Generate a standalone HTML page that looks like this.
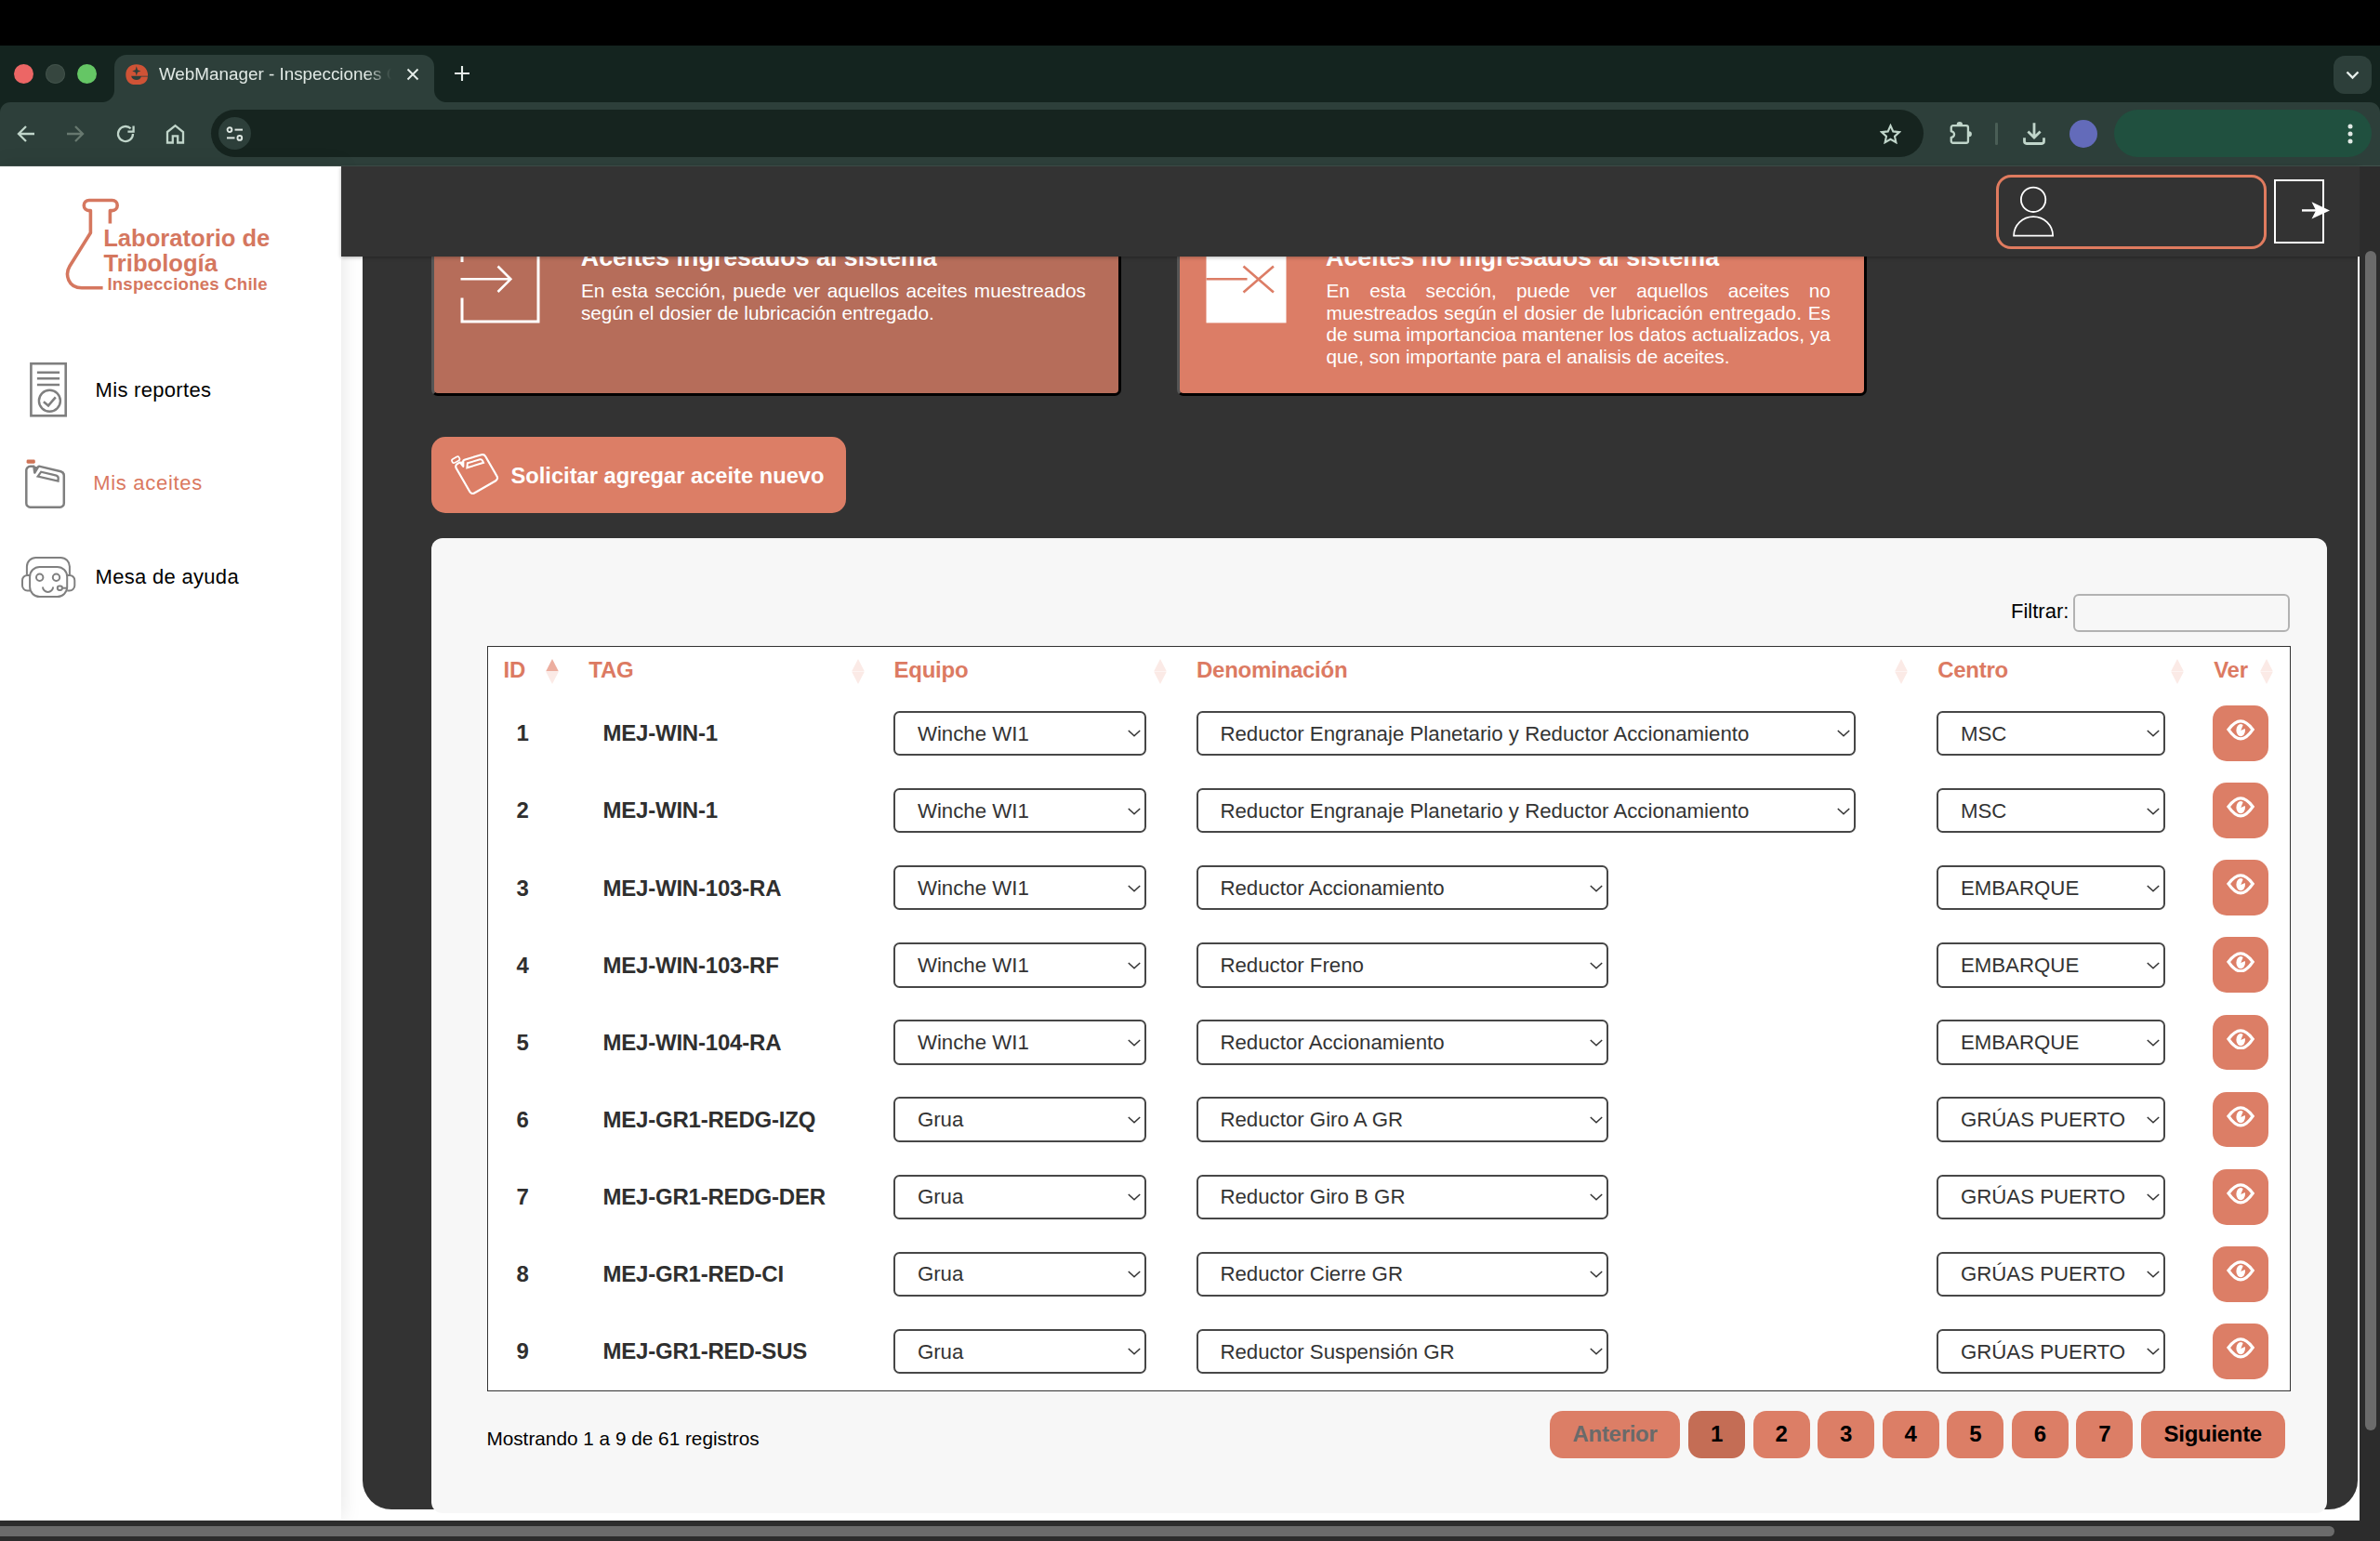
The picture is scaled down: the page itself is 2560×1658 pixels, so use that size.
<!DOCTYPE html>
<html lang="es"><head><meta charset="utf-8"><title>WebManager - Inspecciones Chile</title>
<style>
*{box-sizing:border-box;margin:0;padding:0}
html,body{width:2560px;height:1658px;overflow:hidden}
body{position:relative;background:#fff;font-family:"Liberation Sans",Arial,Helvetica,sans-serif;color:#333}
.abs{position:absolute}
/* ---------- browser chrome ---------- */
#osbar{position:absolute;left:0;top:0;width:2560px;height:49px;background:#000}
#tabstrip{position:absolute;left:0;top:49px;width:2560px;height:85px;background:#14241f}
.tl{position:absolute;top:19.8px;width:21.2px;height:21.2px;border-radius:50%}
#tab{position:absolute;left:123.3px;top:10px;width:344px;height:51px;background:#2d3f3a;border-radius:13px 13px 0 0}
#tab:before,#tab:after{content:"";position:absolute;bottom:0;width:13px;height:13px}
#tab:before{left:-13px;background:radial-gradient(circle at 0 0,transparent 12.5px,#2d3f3a 13.5px)}
#tab:after{right:-13px;background:radial-gradient(circle at 100% 0,transparent 12.5px,#2d3f3a 13.5px)}
#tabtitle{position:absolute;left:47.6px;top:9px;width:252px;height:24px;overflow:hidden;white-space:nowrap;font-size:18.85px;line-height:24px;color:#e1e9e5;-webkit-mask-image:linear-gradient(90deg,#000 222px,transparent 250px);mask-image:linear-gradient(90deg,#000 222px,transparent 250px)}
#tabmenu{position:absolute;left:2510px;top:10.5px;width:41px;height:41px;border-radius:12px;background:#2d3f3a}
#toolbar{position:absolute;left:0;top:110px;width:2560px;height:69px;background:#2d3f3a;border-radius:11px 11px 0 0;border-bottom:1.5px solid #41514c}
#omni{position:absolute;left:227px;top:8px;width:1842px;height:51px;border-radius:26px;background:#16241f}
#siteinfo{position:absolute;left:7.5px;top:8px;width:35px;height:35px;border-radius:50%;background:#2d3f3a}
#profile{position:absolute;left:2226px;top:19px;width:30px;height:30px;border-radius:50%;background:#636bba}
#pill{position:absolute;left:2274px;top:8px;width:277px;height:51px;border-radius:26px;background:#20503f}
.tbi{position:absolute}
/* ---------- page ---------- */
#sidebar{position:absolute;left:0;top:179px;width:366.5px;height:1456px;background:#fff;box-shadow:0 0 21px rgba(0,0,0,.115)}
#header{position:absolute;left:366.6px;top:179px;width:2171.6px;height:97px;background:#333;box-shadow:0 1px 4px rgba(0,0,0,.3);z-index:5}
#dark{position:absolute;left:390.3px;top:276px;width:2146.1px;height:1347.8px;background:#333;border-radius:0 0 31px 31px}
#vscroll{position:absolute;left:2538.2px;top:179px;width:21.8px;height:1457px;background:#2c2c2c;z-index:6}
#vthumb{position:absolute;left:5.5px;top:90.5px;width:12.3px;height:1269px;border-radius:6.2px;background:#6b6b6b}
#hscroll{position:absolute;left:0;top:1635.9px;width:2560px;height:22.1px;background:#2c2c2c;z-index:6}
#hthumb{position:absolute;left:-8px;top:5.8px;width:2519px;height:11.8px;border-radius:6px;background:#6b6b6b}
.nav{position:absolute;left:0;width:366px;height:60px}
.nav span{position:absolute;top:0;font-size:22px;line-height:26px;color:#000;white-space:nowrap}
.logo text{font-family:"Liberation Sans",Arial,sans-serif;font-weight:bold;fill:#d5775f}
/* cards */
.card{position:absolute;top:197px;height:229px;border:3px solid;border-color:#555 #000 #000 #555;border-radius:7px}
.card h3{position:absolute;top:61.3px;font-size:26.8px;line-height:32px;font-weight:bold;color:#fff;white-space:nowrap}
.card p{position:absolute;top:101px;font-size:20.77px;line-height:23.7px;color:#fff;text-align:justify}
.card p span{display:block;text-align-last:justify;white-space:nowrap}
.card p span.last{text-align-last:left}
#btn{position:absolute;left:464.3px;top:470px;width:445.5px;height:82px;border-radius:15px;background:#dc7e66}
#btn span{position:absolute;left:85.2px;top:27.8px;font-size:23.7px;line-height:28px;font-weight:bold;color:#fff;white-space:nowrap}
#panel{position:absolute;left:464.4px;top:578.6px;width:2038.7px;height:1049.7px;background:#f7f7f7;border-radius:12px}
#filterlbl{position:absolute;left:2163px;top:645px;font-size:22px;line-height:26px;color:#000}
#filter{position:absolute;left:2230px;top:638.5px;width:233px;height:41px;border:2px solid #b2b2b2;border-radius:6px}
#table{position:absolute;left:524px;top:695px;width:1939.5px;height:801.7px;background:#fff;border:1px solid #333}
.th{position:absolute;top:11.2px;font-size:24px;line-height:28px;font-weight:bold;color:#dc7a62;white-space:nowrap;letter-spacing:-.25px}
.sort{position:absolute;top:13.2px;width:14px;height:27px}
.row{position:absolute;left:-1px;width:1939.5px;height:83px;margin-top:-696px}
.cid,.ctag{position:absolute;top:27.6px;font-size:24px;line-height:28px;font-weight:bold;color:#2f2f2f;white-space:nowrap}
.cid{left:31.5px}.ctag{left:124.4px;letter-spacing:-.2px}
.sel{position:absolute;top:17.05px;height:48.4px;border:2px solid #474747;border-radius:6.5px;background:#fff}
.sel span{position:absolute;left:23.5px;top:9.8px;font-size:22.25px;line-height:26px;color:#333;white-space:nowrap}
.sel .chev{position:absolute;right:4px;top:18.6px}
.ver{position:absolute;left:1856.4px;top:11.25px;width:59.8px;height:59.8px;border-radius:15px;background:#dc7e66}
.ver .eye{position:absolute;left:14.7px;top:15.2px}
#info{position:absolute;left:523.4px;top:1534.5px;font-size:20.77px;line-height:26px;color:#000;white-space:nowrap}
.pg{position:absolute;top:1517.5px;height:51.5px;border-radius:14px;background:#dc7e66;font-size:24px;line-height:49.5px;font-weight:bold;color:#000;text-align:center;letter-spacing:-.3px}

</style></head>
<body>
<div id="osbar"></div>
<div id="tabstrip">
  <div class="tl" style="left:14.7px;background:#ec6665"></div>
  <div class="tl" style="left:48.8px;background:#36463f;box-shadow:inset 0 0 0 1px #41514a"></div>
  <div class="tl" style="left:82.9px;background:#65c665"></div>
  <div id="tab">
    <svg class="abs" style="left:11.4px;top:9.8px" width="24.4" height="22.5" viewBox="0 0 25 23" preserveAspectRatio="none"><path d="M12.2 0.3 C19.6 0.3 24.7 5.3 24.7 12.4 V13.1 H6.3 C6.9 16.2 9.4 17.5 12.3 17.5 C14.7 17.5 16.5 16.4 17.3 13.9 H24.5 C24.2 19.6 19.8 22.7 13.4 22.7 H10.6 C4.4 22.7 0.3 18.4 0.3 11.6 C0.3 4.9 5 0.3 12.2 0.3 Z" fill="#cf5336"/><path d="M12.1 2.4 L13.3 6.5 L16.8 7.7 L13.3 8.9 L12.1 12.8 L10.9 8.9 L7.4 7.7 L10.9 6.5 Z" fill="#2d3f3a"/></svg>
    <div id="tabtitle">WebManager - Inspecciones Chile</div>
    <svg class="abs" style="left:313.6px;top:14px" width="14" height="14" viewBox="0 0 14 14"><path d="M1.5 1.5 L12.5 12.5 M12.5 1.5 L1.5 12.5" stroke="#e6eeea" stroke-width="1.9" fill="none"/></svg>
  </div>
  <svg class="abs" style="left:488px;top:21px" width="18" height="18" viewBox="0 0 18 18"><path d="M9 1 V17 M1 9 H17" stroke="#e6eeea" stroke-width="2.1" fill="none"/></svg>
  <div id="tabmenu"><svg class="abs" style="left:13px;top:16px" width="15" height="10" viewBox="0 0 15 10"><path d="M1.5 1.5 L7.5 7.5 L13.5 1.5" stroke="#e6eeea" stroke-width="2.4" fill="none"/></svg></div>
</div>
<div id="toolbar">
  <!-- back -->
  <svg class="tbi" style="left:18px;top:24px" width="20" height="20" viewBox="0 0 20 20"><path d="M19 10 H2.5 M10 2 L2 10 L10 18" stroke="#c0d5ca" stroke-width="2.3" fill="none"/></svg>
  <!-- forward -->
  <svg class="tbi" style="left:71px;top:24px" width="20" height="20" viewBox="0 0 20 20"><path d="M1 10 H17.5 M10 2 L18 10 L10 18" stroke="#67786f" stroke-width="2.3" fill="none"/></svg>
  <!-- reload -->
  <svg class="tbi" style="left:124px;top:23px" width="22" height="22" viewBox="0 0 22 22"><path d="M19 11 A8 8 0 1 1 16.6 5.3" stroke="#c0d5ca" stroke-width="2.3" fill="none"/><path d="M19.6 2.4 V8.6 H13.4" stroke="#c0d5ca" stroke-width="2.3" fill="none"/></svg>
  <!-- home -->
  <svg class="tbi" style="left:178px;top:23px" width="21" height="22" viewBox="0 0 21 22"><path d="M2 9 L10.5 2.2 L19 9 V20.5 H13.2 V13.4 H7.8 V20.5 H2 Z" stroke="#c0d5ca" stroke-width="2.3" fill="none" stroke-linejoin="miter"/></svg>
  <div id="omni">
    <div id="siteinfo"><svg class="abs" style="left:8.5px;top:9.5px" width="19" height="16" viewBox="0 0 19 16"><circle cx="4" cy="3.6" r="2.4" stroke="#dfe8e3" stroke-width="1.9" fill="none"/><path d="M9.5 3.6 H18" stroke="#dfe8e3" stroke-width="2"/><circle cx="14.8" cy="12.4" r="2.4" stroke="#dfe8e3" stroke-width="1.9" fill="none"/><path d="M1 12.4 H9.5" stroke="#dfe8e3" stroke-width="2"/></svg></div>
    <!-- star -->
    <svg class="abs" style="left:1794.5px;top:14.5px" width="23" height="22" viewBox="0 0 23 22"><path d="M11.5 2.2 L14.3 8.4 L21 9.1 L16 13.6 L17.4 20.2 L11.5 16.8 L5.6 20.2 L7 13.6 L2 9.1 L8.7 8.4 Z" stroke="#c0d5ca" stroke-width="2.1" fill="none" stroke-linejoin="miter"/></svg>
  </div>
  <!-- extension -->
  <svg class="tbi" style="left:2095.5px;top:19.5px" width="27" height="27" viewBox="0 0 27 27"><path d="M2.75 11.3 V7.15 A2 2 0 0 1 4.75 5.15 H18.95 A2 2 0 0 1 20.95 7.15 V21.75 A2 2 0 0 1 18.95 23.75 H4.75 A2 2 0 0 1 2.75 21.75 V17.9 A3.3 3.3 0 0 0 2.75 11.3 Z" stroke="#c0d5ca" stroke-width="2.3" fill="none" stroke-linejoin="round"/><path d="M8.65 4.2 A3.2 3.2 0 0 1 15.05 4.2 Z M21.9 11.35 A3 3 0 0 1 21.9 17.35 Z" fill="#c0d5ca"/></svg>
  <div class="abs" style="left:2146.2px;top:22px;width:2.6px;height:23.6px;background:#4a5e56;border-radius:1.3px"></div>
  <!-- download -->
  <svg class="tbi" style="left:2175.5px;top:22px" width="24" height="24" viewBox="0 0 24 24"><path d="M12 0.2 V16 M5.4 9.4 L12 16 L18.6 9.4" stroke="#c0d5ca" stroke-width="2.8" fill="none"/><path d="M1.5 16.2 V20.1 A2.4 2.4 0 0 0 3.9 22.5 H20.1 A2.4 2.4 0 0 0 22.5 20.1 V16.2" stroke="#c0d5ca" stroke-width="2.8" fill="none"/></svg>
  <div id="profile"></div>
  <div id="pill">
    <svg class="abs" style="left:250.5px;top:14.5px" width="6" height="22" viewBox="0 0 6 22"><circle cx="3" cy="3" r="2.5" fill="#e1e9e5"/><circle cx="3" cy="11" r="2.5" fill="#e1e9e5"/><circle cx="3" cy="19" r="2.5" fill="#e1e9e5"/></svg>
  </div>
</div>

<div id="sidebar">
  <svg class="logo abs" style="left:0;top:0" width="366" height="170" viewBox="0 0 366 170">
    <path d="M118.4 61.4 V47.6 H120.65 A5.55 5.55 0 0 0 120.65 36.5 H95.85 A5.55 5.55 0 0 0 95.85 47.6 H97.4 V71.5 L74.9 107.5 C69.6 116.4 73.2 130.8 88 130.8 H110.6" fill="none" stroke="#d5775f" stroke-width="3.6" stroke-linejoin="round"/>
    <text x="111.2" y="86.4" font-size="25.6">Laboratorio de</text>
    <text x="111.6" y="112.5" font-size="25.6">Tribología</text>
    <text x="115.4" y="132.5" font-size="18.6" letter-spacing="0.22">Inspecciones Chile</text>
  </svg>
  <!-- Mis reportes -->
  <svg class="abs" style="left:28px;top:207px" width="48" height="66" viewBox="28 386 48 66">
    <rect x="33.4" y="391.2" width="37.3" height="56.1" fill="none" stroke="#7f7f7f" stroke-width="2.6"/>
    <path d="M39.9 400.7 H64.1 M39.9 407.3 H64.1 M39.9 414 H64.1" stroke="#7f7f7f" stroke-width="2.5" fill="none"/>
    <circle cx="53.4" cy="431.2" r="11.5" fill="none" stroke="#7f7f7f" stroke-width="2.4"/>
    <path d="M46.9 432.2 L52 436.4 L59.8 427.4" fill="none" stroke="#7f7f7f" stroke-width="2.5"/>
  </svg>
  <div class="nav" style="top:227.5px"><span style="left:102.6px;letter-spacing:.3px">Mis reportes</span></div>
  <!-- Mis aceites -->
  <svg class="abs" style="left:22px;top:311px" width="54" height="62" viewBox="22 490 54 62">
    <rect x="28.6" y="494.5" width="9.2" height="4.2" rx="1.4" fill="#cf7457"/>
    <path id="canbody" d="M28.3 506 A4.2 4.2 0 0 1 32.5 501.8 H36.4 L37.3 508.6 L41 502.3 Q41.6 501.6 43 501.9 L65.4 507.2 Q68.8 508.2 68.8 511.6 V541.5 A4.2 4.2 0 0 1 64.6 545.7 H32.5 A4.2 4.2 0 0 1 28.3 541.5 Z" fill="none" stroke="#7f7f7f" stroke-width="2.5" stroke-linejoin="round"/>
    <path d="M36.4 501.8 L37.3 509.4 L41 502.3 Z" fill="#7f7f7f"/>
    <path id="canhandle" d="M40.7 512.6 L44.2 507.7 L60.6 511.6 Q62.8 512.4 62.7 514.6 L62.5 517.5 Z" fill="none" stroke="#7f7f7f" stroke-width="2.3" stroke-linejoin="miter"/>
  </svg>
  <div class="nav" style="top:328px"><span style="left:100.2px;color:#da7860;letter-spacing:.7px">Mis aceites</span></div>
  <!-- Mesa de ayuda -->
  <svg class="abs" style="left:20px;top:417px" width="64" height="50" viewBox="20 596 64 50">
    <g fill="none" stroke="#808080" stroke-width="2">
      <path d="M28.9 618.7 V609.6 A9.6 9.6 0 0 1 38.5 600 H65.3 A9.6 9.6 0 0 1 74.9 609.6 V618.7"/>
      <rect x="32.1" y="610" width="40.1" height="32" rx="10.5"/>
      <path d="M32 618.9 H29.5 A5.5 5.5 0 0 0 24 624.4 V630 A5.5 5.5 0 0 0 29.5 635.5 H32"/>
      <path d="M72.3 618.9 H74.8 A5.5 5.5 0 0 1 80.3 624.4 V630 A5.5 5.5 0 0 1 74.8 635.5 H72.3"/>
      <circle cx="42.7" cy="621.3" r="3.7"/><circle cx="60.5" cy="621.3" r="3.7"/>
      <path d="M46 631.4 A5.55 5.55 0 0 0 57.1 631.4"/>
      <rect x="61.8" y="630.6" width="5.2" height="4.3" rx="2.1"/>
      <path d="M67.4 632.7 H72"/>
    </g>
  </svg>
  <div class="nav" style="top:429.2px"><span style="left:102.6px;letter-spacing:.3px">Mesa de ayuda</span></div>
</div>

<div id="dark"></div>
<!-- cards -->
<div class="card" style="left:464.3px;width:742.2px;background:#b66d5a">
  <svg class="abs" style="left:26px;top:70px" width="92" height="82" viewBox="493 270 92 82"><path d="M497 282 V270 H579 V346 H497 V320.5" fill="none" stroke="#fff" stroke-width="3"/><path d="M495.5 300.3 H548 M535.5 286.5 L549.3 300.3 L535.5 314" fill="none" stroke="#fff" stroke-width="2.6"/></svg>
  <h3 style="left:157.5px">Aceites ingresados al sistema</h3>
  <p style="left:157.6px;width:543px"><span>En esta sección, puede ver aquellos aceites muestreados</span><span class="last">según el dosier de lubricación entregado.</span></p>
</div>
<div class="card" style="left:1265.6px;width:742.8px;background:#dc7d66">
  <svg class="abs" style="left:26px;top:60px" width="92" height="92" viewBox="1294.5 260 92 92"><rect x="1297" y="262" width="86" height="85.4" fill="#fff"/><path d="M1297 300.3 H1341 M1337 286.4 L1369.4 314.4 M1369.4 286.4 L1337 314.4" fill="none" stroke="#dc7d66" stroke-width="2.6"/></svg>
  <h3 style="left:157.5px">Aceites no ingresados al sistema</h3>
  <p style="left:157.9px;width:542.4px"><span>En esta sección, puede ver aquellos aceites no</span><span>muestreados según el dosier de lubricación entregado. Es</span><span>de suma importancioa mantener los datos actualizados, ya</span><span class="last">que, son importante para el analisis de aceites.</span></p>
</div>
<div id="header">
  <div class="abs" style="left:1780.5px;top:9px;width:291px;height:80px;border:3px solid #e07b5f;border-radius:16px"></div>
  <svg class="abs" style="left:1794px;top:18px" width="52" height="62" viewBox="2160.5 197 52 62"><circle cx="2186.6" cy="214.8" r="13.2" fill="none" stroke="#fff" stroke-width="1.8"/><path d="M2165.6 253.6 A21 20.4 0 0 1 2207.6 253.6 Z" fill="none" stroke="#fff" stroke-width="1.8" stroke-linejoin="miter"/></svg>
  <div class="abs" style="left:2079.5px;top:14px;width:54px;height:69px;border:2.6px solid #fff"></div>
  <svg class="abs" style="left:2104px;top:33px" width="40" height="28" viewBox="2470.5 212 40 28"><path d="M2475.5 226.4 H2492" stroke="#fff" stroke-width="2.4" fill="none"/><path d="M2505.5 226.4 L2486 217.2 L2490.6 226.4 L2486 235.6 Z" fill="#fff"/></svg>
</div>
<!-- button -->
<div id="btn">
  <svg class="abs" style="left:14px;top:8px" width="70" height="66" viewBox="478.5 478.5 70 66">
    <g transform="translate(513.1 508.6) rotate(-30) scale(0.83) translate(-48.5 -523.75)" fill="none" stroke="#fff" stroke-width="2.6" stroke-linejoin="round">
      <rect x="28" y="493.6" width="10.4" height="5.4" rx="2.2" stroke-width="2"/>
      <path d="M28.3 506 A4.2 4.2 0 0 1 32.5 501.8 H36.4 L37.3 508.6 L41 502.3 Q41.6 501.6 43 501.9 L65.4 507.2 Q68.8 508.2 68.8 511.6 V541.5 A4.2 4.2 0 0 1 64.6 545.7 H32.5 A4.2 4.2 0 0 1 28.3 541.5 Z"/>
      <path d="M36.4 501.8 L37.3 509.4 L41 502.3 Z" fill="#fff" stroke="none"/>
      <path d="M40.7 512.6 L44.2 507.7 L60.6 511.6 Q62.8 512.4 62.7 514.6 L62.5 517.5 Z" stroke-linejoin="miter" stroke-width="2.4"/>
    </g>
  </svg>
  <span>Solicitar agregar aceite nuevo</span>
</div>
<!-- panel -->
<div id="panel"></div>
<div id="filterlbl">Filtrar:</div>
<div id="filter"></div>
<div id="table">
  <span class="th" style="left:16.5px">ID</span>
  <span class="th" style="left:108.3px">TAG</span>
  <span class="th" style="left:436.5px">Equipo</span>
  <span class="th" style="left:762px">Denominación</span>
  <span class="th" style="left:1559.2px">Centro</span>
  <span class="th" style="left:1856.2px">Ver</span>
  <svg class="sort" style="left:62.3px" viewBox="0 0 14 27"><path d="M7 0 L13.8 13.2 H0.2 Z" fill="#ecae9f"/><path d="M7 27 L13.8 13.8 H0.2 Z" fill="#fbeae6"/></svg>
  <svg class="sort" style="left:391.1px" viewBox="0 0 14 27"><path d="M7 0 L13.8 13.2 H0.2 Z M7 27 L13.8 13.8 H0.2 Z" fill="#fbeae6"/></svg>
  <svg class="sort" style="left:716.1px" viewBox="0 0 14 27"><path d="M7 0 L13.8 13.2 H0.2 Z M7 27 L13.8 13.8 H0.2 Z" fill="#fbeae6"/></svg>
  <svg class="sort" style="left:1513.3px" viewBox="0 0 14 27"><path d="M7 0 L13.8 13.2 H0.2 Z M7 27 L13.8 13.8 H0.2 Z" fill="#fbeae6"/></svg>
  <svg class="sort" style="left:1810.2px" viewBox="0 0 14 27"><path d="M7 0 L13.8 13.2 H0.2 Z M7 27 L13.8 13.8 H0.2 Z" fill="#fbeae6"/></svg>
  <svg class="sort" style="left:1906.2px" viewBox="0 0 14 27"><path d="M7 0 L13.8 13.2 H0.2 Z M7 27 L13.8 13.8 H0.2 Z" fill="#fbeae6"/></svg>
<div class="row" style="top:747.75px"><span class="cid">1</span><span class="ctag">MEJ-WIN-1</span><div class="sel s1" style="left:437.4px;width:271.7px"><span>Winche WI1</span><svg class="chev" viewBox="0 0 14 8" width="14" height="8"><path d="M0.8 1 L7 6.8 L13.2 1" fill="none" stroke="#333" stroke-width="1.5"/></svg></div><div class="sel s2" style="left:762.9000000000001px;width:709.2px"><span>Reductor Engranaje Planetario y Reductor Accionamiento</span><svg class="chev" viewBox="0 0 14 8" width="14" height="8"><path d="M0.8 1 L7 6.8 L13.2 1" fill="none" stroke="#333" stroke-width="1.5"/></svg></div><div class="sel s3" style="left:1559.4px;width:245.7px"><span>MSC</span><svg class="chev" viewBox="0 0 14 8" width="14" height="8"><path d="M0.8 1 L7 6.8 L13.2 1" fill="none" stroke="#333" stroke-width="1.5"/></svg></div><div class="ver"><svg class="eye" viewBox="0 0 30.2 22.7" width="30.2" height="22.7"><ellipse cx="15.2" cy="11.7" rx="4.8" ry="6.6" fill="#fff"/><path d="M15.3 12 L18.4 4.2 L22 4.2 L22 9 Z" fill="#dc7e66"/><path d="M2 10.9 C6.4 5.2 10.6 1.9 15.1 1.9 C19.6 1.9 23.8 5.2 28.2 10.9 C23.8 17.4 19.6 20.9 15.1 20.9 C10.6 20.9 6.4 17.4 2 10.9 Z" fill="none" stroke="#fff" stroke-width="3.3" stroke-linejoin="miter"/></svg></div></div>
<div class="row" style="top:830.88px"><span class="cid">2</span><span class="ctag">MEJ-WIN-1</span><div class="sel s1" style="left:437.4px;width:271.7px"><span>Winche WI1</span><svg class="chev" viewBox="0 0 14 8" width="14" height="8"><path d="M0.8 1 L7 6.8 L13.2 1" fill="none" stroke="#333" stroke-width="1.5"/></svg></div><div class="sel s2" style="left:762.9000000000001px;width:709.2px"><span>Reductor Engranaje Planetario y Reductor Accionamiento</span><svg class="chev" viewBox="0 0 14 8" width="14" height="8"><path d="M0.8 1 L7 6.8 L13.2 1" fill="none" stroke="#333" stroke-width="1.5"/></svg></div><div class="sel s3" style="left:1559.4px;width:245.7px"><span>MSC</span><svg class="chev" viewBox="0 0 14 8" width="14" height="8"><path d="M0.8 1 L7 6.8 L13.2 1" fill="none" stroke="#333" stroke-width="1.5"/></svg></div><div class="ver"><svg class="eye" viewBox="0 0 30.2 22.7" width="30.2" height="22.7"><ellipse cx="15.2" cy="11.7" rx="4.8" ry="6.6" fill="#fff"/><path d="M15.3 12 L18.4 4.2 L22 4.2 L22 9 Z" fill="#dc7e66"/><path d="M2 10.9 C6.4 5.2 10.6 1.9 15.1 1.9 C19.6 1.9 23.8 5.2 28.2 10.9 C23.8 17.4 19.6 20.9 15.1 20.9 C10.6 20.9 6.4 17.4 2 10.9 Z" fill="none" stroke="#fff" stroke-width="3.3" stroke-linejoin="miter"/></svg></div></div>
<div class="row" style="top:914.00px"><span class="cid">3</span><span class="ctag">MEJ-WIN-103-RA</span><div class="sel s1" style="left:437.4px;width:271.7px"><span>Winche WI1</span><svg class="chev" viewBox="0 0 14 8" width="14" height="8"><path d="M0.8 1 L7 6.8 L13.2 1" fill="none" stroke="#333" stroke-width="1.5"/></svg></div><div class="sel s2" style="left:762.9000000000001px;width:443.2px"><span>Reductor Accionamiento</span><svg class="chev" viewBox="0 0 14 8" width="14" height="8"><path d="M0.8 1 L7 6.8 L13.2 1" fill="none" stroke="#333" stroke-width="1.5"/></svg></div><div class="sel s3" style="left:1559.4px;width:245.7px"><span>EMBARQUE</span><svg class="chev" viewBox="0 0 14 8" width="14" height="8"><path d="M0.8 1 L7 6.8 L13.2 1" fill="none" stroke="#333" stroke-width="1.5"/></svg></div><div class="ver"><svg class="eye" viewBox="0 0 30.2 22.7" width="30.2" height="22.7"><ellipse cx="15.2" cy="11.7" rx="4.8" ry="6.6" fill="#fff"/><path d="M15.3 12 L18.4 4.2 L22 4.2 L22 9 Z" fill="#dc7e66"/><path d="M2 10.9 C6.4 5.2 10.6 1.9 15.1 1.9 C19.6 1.9 23.8 5.2 28.2 10.9 C23.8 17.4 19.6 20.9 15.1 20.9 C10.6 20.9 6.4 17.4 2 10.9 Z" fill="none" stroke="#fff" stroke-width="3.3" stroke-linejoin="miter"/></svg></div></div>
<div class="row" style="top:997.12px"><span class="cid">4</span><span class="ctag">MEJ-WIN-103-RF</span><div class="sel s1" style="left:437.4px;width:271.7px"><span>Winche WI1</span><svg class="chev" viewBox="0 0 14 8" width="14" height="8"><path d="M0.8 1 L7 6.8 L13.2 1" fill="none" stroke="#333" stroke-width="1.5"/></svg></div><div class="sel s2" style="left:762.9000000000001px;width:443.2px"><span>Reductor Freno</span><svg class="chev" viewBox="0 0 14 8" width="14" height="8"><path d="M0.8 1 L7 6.8 L13.2 1" fill="none" stroke="#333" stroke-width="1.5"/></svg></div><div class="sel s3" style="left:1559.4px;width:245.7px"><span>EMBARQUE</span><svg class="chev" viewBox="0 0 14 8" width="14" height="8"><path d="M0.8 1 L7 6.8 L13.2 1" fill="none" stroke="#333" stroke-width="1.5"/></svg></div><div class="ver"><svg class="eye" viewBox="0 0 30.2 22.7" width="30.2" height="22.7"><ellipse cx="15.2" cy="11.7" rx="4.8" ry="6.6" fill="#fff"/><path d="M15.3 12 L18.4 4.2 L22 4.2 L22 9 Z" fill="#dc7e66"/><path d="M2 10.9 C6.4 5.2 10.6 1.9 15.1 1.9 C19.6 1.9 23.8 5.2 28.2 10.9 C23.8 17.4 19.6 20.9 15.1 20.9 C10.6 20.9 6.4 17.4 2 10.9 Z" fill="none" stroke="#fff" stroke-width="3.3" stroke-linejoin="miter"/></svg></div></div>
<div class="row" style="top:1080.25px"><span class="cid">5</span><span class="ctag">MEJ-WIN-104-RA</span><div class="sel s1" style="left:437.4px;width:271.7px"><span>Winche WI1</span><svg class="chev" viewBox="0 0 14 8" width="14" height="8"><path d="M0.8 1 L7 6.8 L13.2 1" fill="none" stroke="#333" stroke-width="1.5"/></svg></div><div class="sel s2" style="left:762.9000000000001px;width:443.2px"><span>Reductor Accionamiento</span><svg class="chev" viewBox="0 0 14 8" width="14" height="8"><path d="M0.8 1 L7 6.8 L13.2 1" fill="none" stroke="#333" stroke-width="1.5"/></svg></div><div class="sel s3" style="left:1559.4px;width:245.7px"><span>EMBARQUE</span><svg class="chev" viewBox="0 0 14 8" width="14" height="8"><path d="M0.8 1 L7 6.8 L13.2 1" fill="none" stroke="#333" stroke-width="1.5"/></svg></div><div class="ver"><svg class="eye" viewBox="0 0 30.2 22.7" width="30.2" height="22.7"><ellipse cx="15.2" cy="11.7" rx="4.8" ry="6.6" fill="#fff"/><path d="M15.3 12 L18.4 4.2 L22 4.2 L22 9 Z" fill="#dc7e66"/><path d="M2 10.9 C6.4 5.2 10.6 1.9 15.1 1.9 C19.6 1.9 23.8 5.2 28.2 10.9 C23.8 17.4 19.6 20.9 15.1 20.9 C10.6 20.9 6.4 17.4 2 10.9 Z" fill="none" stroke="#fff" stroke-width="3.3" stroke-linejoin="miter"/></svg></div></div>
<div class="row" style="top:1163.38px"><span class="cid">6</span><span class="ctag">MEJ-GR1-REDG-IZQ</span><div class="sel s1" style="left:437.4px;width:271.7px"><span>Grua</span><svg class="chev" viewBox="0 0 14 8" width="14" height="8"><path d="M0.8 1 L7 6.8 L13.2 1" fill="none" stroke="#333" stroke-width="1.5"/></svg></div><div class="sel s2" style="left:762.9000000000001px;width:443.2px"><span>Reductor Giro A GR</span><svg class="chev" viewBox="0 0 14 8" width="14" height="8"><path d="M0.8 1 L7 6.8 L13.2 1" fill="none" stroke="#333" stroke-width="1.5"/></svg></div><div class="sel s3" style="left:1559.4px;width:245.7px"><span>GRÚAS PUERTO</span><svg class="chev" viewBox="0 0 14 8" width="14" height="8"><path d="M0.8 1 L7 6.8 L13.2 1" fill="none" stroke="#333" stroke-width="1.5"/></svg></div><div class="ver"><svg class="eye" viewBox="0 0 30.2 22.7" width="30.2" height="22.7"><ellipse cx="15.2" cy="11.7" rx="4.8" ry="6.6" fill="#fff"/><path d="M15.3 12 L18.4 4.2 L22 4.2 L22 9 Z" fill="#dc7e66"/><path d="M2 10.9 C6.4 5.2 10.6 1.9 15.1 1.9 C19.6 1.9 23.8 5.2 28.2 10.9 C23.8 17.4 19.6 20.9 15.1 20.9 C10.6 20.9 6.4 17.4 2 10.9 Z" fill="none" stroke="#fff" stroke-width="3.3" stroke-linejoin="miter"/></svg></div></div>
<div class="row" style="top:1246.50px"><span class="cid">7</span><span class="ctag">MEJ-GR1-REDG-DER</span><div class="sel s1" style="left:437.4px;width:271.7px"><span>Grua</span><svg class="chev" viewBox="0 0 14 8" width="14" height="8"><path d="M0.8 1 L7 6.8 L13.2 1" fill="none" stroke="#333" stroke-width="1.5"/></svg></div><div class="sel s2" style="left:762.9000000000001px;width:443.2px"><span>Reductor Giro B GR</span><svg class="chev" viewBox="0 0 14 8" width="14" height="8"><path d="M0.8 1 L7 6.8 L13.2 1" fill="none" stroke="#333" stroke-width="1.5"/></svg></div><div class="sel s3" style="left:1559.4px;width:245.7px"><span>GRÚAS PUERTO</span><svg class="chev" viewBox="0 0 14 8" width="14" height="8"><path d="M0.8 1 L7 6.8 L13.2 1" fill="none" stroke="#333" stroke-width="1.5"/></svg></div><div class="ver"><svg class="eye" viewBox="0 0 30.2 22.7" width="30.2" height="22.7"><ellipse cx="15.2" cy="11.7" rx="4.8" ry="6.6" fill="#fff"/><path d="M15.3 12 L18.4 4.2 L22 4.2 L22 9 Z" fill="#dc7e66"/><path d="M2 10.9 C6.4 5.2 10.6 1.9 15.1 1.9 C19.6 1.9 23.8 5.2 28.2 10.9 C23.8 17.4 19.6 20.9 15.1 20.9 C10.6 20.9 6.4 17.4 2 10.9 Z" fill="none" stroke="#fff" stroke-width="3.3" stroke-linejoin="miter"/></svg></div></div>
<div class="row" style="top:1329.62px"><span class="cid">8</span><span class="ctag">MEJ-GR1-RED-CI</span><div class="sel s1" style="left:437.4px;width:271.7px"><span>Grua</span><svg class="chev" viewBox="0 0 14 8" width="14" height="8"><path d="M0.8 1 L7 6.8 L13.2 1" fill="none" stroke="#333" stroke-width="1.5"/></svg></div><div class="sel s2" style="left:762.9000000000001px;width:443.2px"><span>Reductor Cierre GR</span><svg class="chev" viewBox="0 0 14 8" width="14" height="8"><path d="M0.8 1 L7 6.8 L13.2 1" fill="none" stroke="#333" stroke-width="1.5"/></svg></div><div class="sel s3" style="left:1559.4px;width:245.7px"><span>GRÚAS PUERTO</span><svg class="chev" viewBox="0 0 14 8" width="14" height="8"><path d="M0.8 1 L7 6.8 L13.2 1" fill="none" stroke="#333" stroke-width="1.5"/></svg></div><div class="ver"><svg class="eye" viewBox="0 0 30.2 22.7" width="30.2" height="22.7"><ellipse cx="15.2" cy="11.7" rx="4.8" ry="6.6" fill="#fff"/><path d="M15.3 12 L18.4 4.2 L22 4.2 L22 9 Z" fill="#dc7e66"/><path d="M2 10.9 C6.4 5.2 10.6 1.9 15.1 1.9 C19.6 1.9 23.8 5.2 28.2 10.9 C23.8 17.4 19.6 20.9 15.1 20.9 C10.6 20.9 6.4 17.4 2 10.9 Z" fill="none" stroke="#fff" stroke-width="3.3" stroke-linejoin="miter"/></svg></div></div>
<div class="row" style="top:1412.75px"><span class="cid">9</span><span class="ctag">MEJ-GR1-RED-SUS</span><div class="sel s1" style="left:437.4px;width:271.7px"><span>Grua</span><svg class="chev" viewBox="0 0 14 8" width="14" height="8"><path d="M0.8 1 L7 6.8 L13.2 1" fill="none" stroke="#333" stroke-width="1.5"/></svg></div><div class="sel s2" style="left:762.9000000000001px;width:443.2px"><span>Reductor Suspensión GR</span><svg class="chev" viewBox="0 0 14 8" width="14" height="8"><path d="M0.8 1 L7 6.8 L13.2 1" fill="none" stroke="#333" stroke-width="1.5"/></svg></div><div class="sel s3" style="left:1559.4px;width:245.7px"><span>GRÚAS PUERTO</span><svg class="chev" viewBox="0 0 14 8" width="14" height="8"><path d="M0.8 1 L7 6.8 L13.2 1" fill="none" stroke="#333" stroke-width="1.5"/></svg></div><div class="ver"><svg class="eye" viewBox="0 0 30.2 22.7" width="30.2" height="22.7"><ellipse cx="15.2" cy="11.7" rx="4.8" ry="6.6" fill="#fff"/><path d="M15.3 12 L18.4 4.2 L22 4.2 L22 9 Z" fill="#dc7e66"/><path d="M2 10.9 C6.4 5.2 10.6 1.9 15.1 1.9 C19.6 1.9 23.8 5.2 28.2 10.9 C23.8 17.4 19.6 20.9 15.1 20.9 C10.6 20.9 6.4 17.4 2 10.9 Z" fill="none" stroke="#fff" stroke-width="3.3" stroke-linejoin="miter"/></svg></div></div>
</div>
<div id="info">Mostrando 1 a 9 de 61 registros</div>
<div class="pg" style="left:1667px;width:140px;color:#6a6a6a">Anterior</div>
<div class="pg" style="left:1816px;width:61px;background:#c46d55">1</div>
<div class="pg" style="left:1885.5px;width:61px">2</div>
<div class="pg" style="left:1955px;width:61px">3</div>
<div class="pg" style="left:2024.6px;width:61px">4</div>
<div class="pg" style="left:2094.4px;width:61px">5</div>
<div class="pg" style="left:2163.8px;width:61px">6</div>
<div class="pg" style="left:2233.3px;width:61px">7</div>
<div class="pg" style="left:2303px;width:154.5px">Siguiente</div>
<div id="vscroll"><div id="vthumb"></div></div>
<div id="hscroll"><div id="hthumb"></div></div>

</body></html>
